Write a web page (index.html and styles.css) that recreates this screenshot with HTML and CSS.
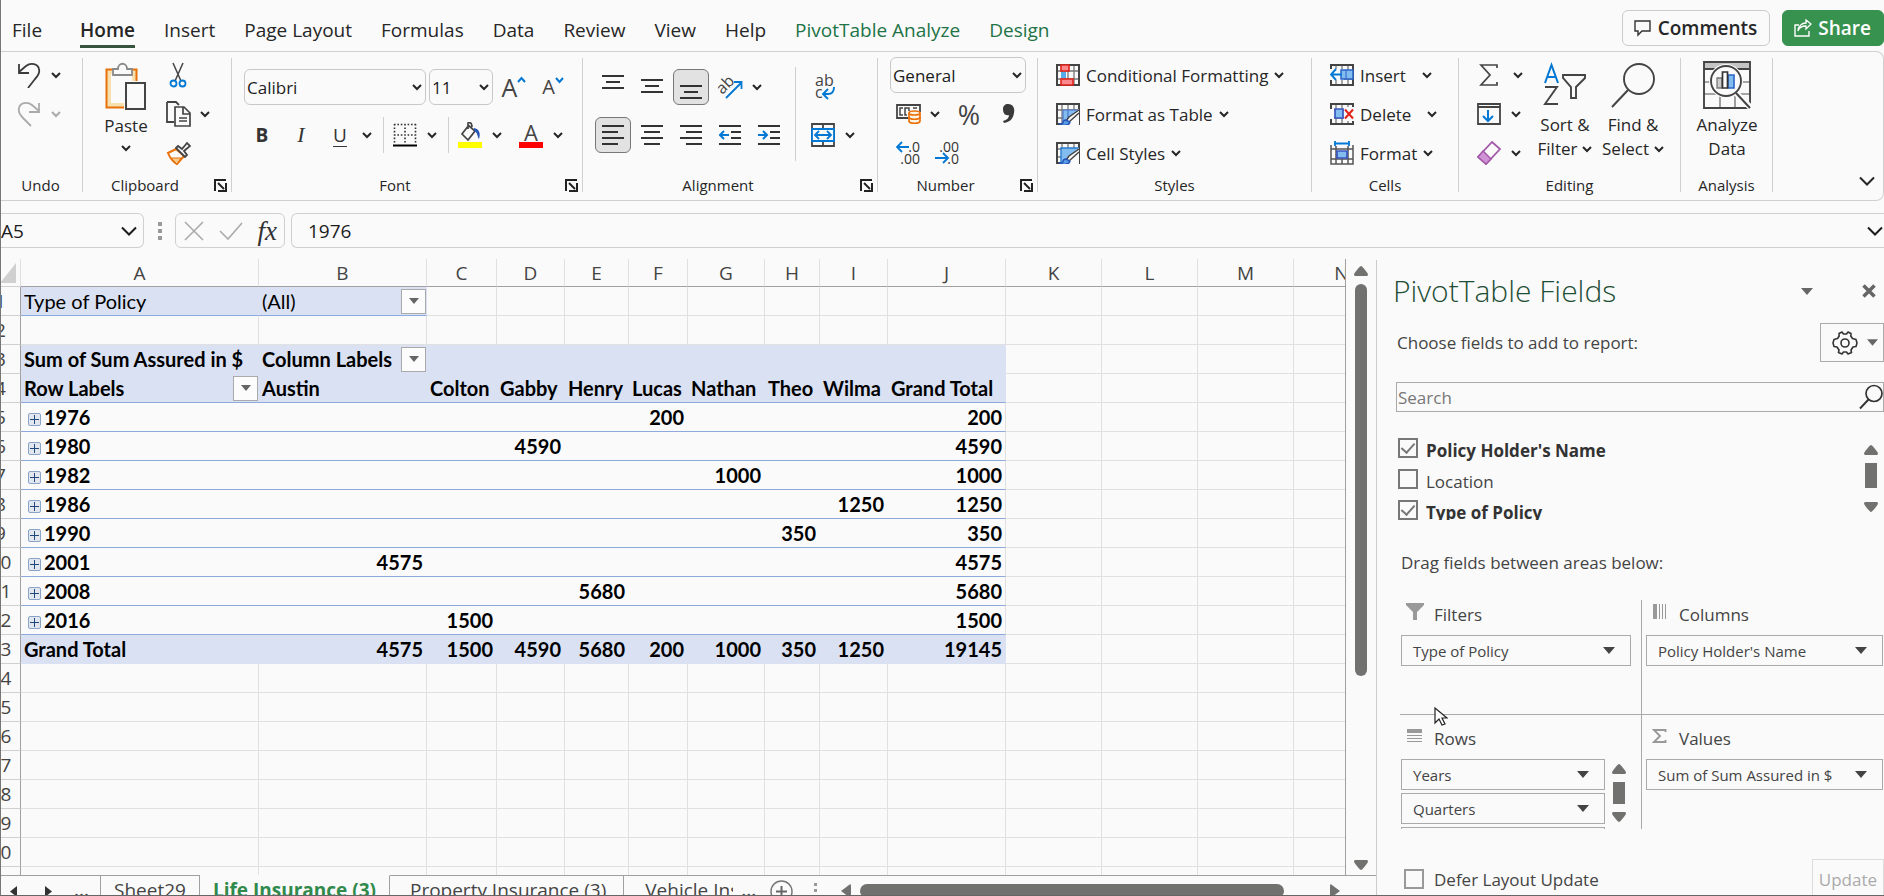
FILE: index.html
```html
<!DOCTYPE html>
<html lang="en">
<head>
<meta charset="utf-8">
<title>Life Insurance - Spreadsheet</title>
<link rel="stylesheet" href="styles.css">
</head>
<body>
<svg class="defs" aria-hidden="true">
  <symbol id="chev" viewBox="0 0 10 8"><path d="M1 2l4 4 4-4" fill="none" stroke="currentColor" stroke-width="2"/></symbol>
  <symbol id="chev-lg" viewBox="0 0 16 10"><path d="M1 1.500l7 7 7-7" fill="none" stroke="currentColor" stroke-width="2"/></symbol>
  <symbol id="tri" viewBox="0 0 12 7"><path d="M0 0h12L6 7z" fill="currentColor"/></symbol>
  <symbol id="launch" viewBox="0 0 13 13"><path d="M1 12V1h11" fill="none" stroke="#222" stroke-width="2"/><path d="M4 4l6 6" stroke="#222" stroke-width="2"/><path d="M12 4v8H4" fill="none" stroke="#222" stroke-width="2"/></symbol>
  <symbol id="sb-up" viewBox="0 0 14 10"><path d="M7 0c1 0 7 7 7 8.500S13 10 12 10H2C1 10 0 10 0 8.500S6 0 7 0z" fill="#71716f"/></symbol>
  <symbol id="sb-down" viewBox="0 0 14 10"><path d="M7 10c1 0 7-7 7-8.500S13 0 12 0H2C1 0 0 0 0 1.500S6 10 7 10z" fill="#71716f"/></symbol>
  <symbol id="grid" viewBox="0 0 24 22"><path d="M1 1h22v20H1zM1 7h22M1 15h22M6 1v20M12 1v20M18 1v20" fill="none" stroke="#777" stroke-width="1.300"/><path d="M1 1h22v20H1z" fill="none" stroke="#444" stroke-width="2"/></symbol>
  <symbol id="brush" viewBox="0 0 24 22"><path d="M23 6L12 17l-8 5h19z" fill="#fafafa"/><path d="M23 7L13 14l-3 4 3 1 10-9" fill="#fafafa" stroke="#444" stroke-width="1.500"/><path d="M10 17c-2 0-3 1-3 3-1 1-2 1-3 1 3 2 9 2 10-2z" fill="#5a9be6" stroke="#2456b8" stroke-width="1.400"/></symbol>
</svg>
<div class="window">
  <header class="tabs">
    <nav class="tab-list" aria-label="Ribbon tabs">
      <button class="tab tab-file">File</button>
      <button class="tab tab-active">Home</button>
      <button class="tab">Insert</button>
      <button class="tab">Page Layout</button>
      <button class="tab">Formulas</button>
      <button class="tab">Data</button>
      <button class="tab">Review</button>
      <button class="tab">View</button>
      <button class="tab">Help</button>
      <button class="tab tab-context">PivotTable Analyze</button>
      <button class="tab tab-context">Design</button>
    </nav>
    <div class="actions">
      <button class="action"><svg width="18" height="18" viewBox="0 0 18 18"><path d="M1 2h15v10H8l-4 4v-4H1z" fill="none" stroke="#333" stroke-width="1.400"/></svg>Comments</button>
      <button class="action action-share"><svg width="18" height="18" viewBox="0 0 18 18"><path d="M5 6H1v11h14v-5" fill="none" stroke="#fff" stroke-width="1.400"/><path d="M4 12c1-4 4-5 8-5v3l5-5-5-4v3C8 4 4 7 4 12z" fill="none" stroke="#fff" stroke-width="1.300"/></svg>Share</button>
    </div>
  </header>

  <section class="ribbon" aria-label="Home ribbon">
    <div class="group group-undo">
      <div class="rows3">
        <div class="split"><button class="ico" aria-label="Undo"><svg width="24" height="26" viewBox="0 0 24 26"><path d="M2 2v9h10M2 10l7-6c5-4 12-2 13 3 1 4-1 7-4 10l-7 9" fill="none" stroke="#3b3b3b" stroke-width="1.800"/></svg></button><button class="chev" aria-label="Undo list"><svg><use href="#chev"/></svg></button></div>
        <div class="split disabled"><button class="ico" aria-label="Redo"><svg width="24" height="26" viewBox="0 0 24 26"><path d="M22 2v9H12M22 10l-7-6C10 0 3 2 2 7c-1 4 1 7 4 10l8 8" fill="none" stroke="#aaa" stroke-width="1.800"/></svg></button><button class="chev" aria-label="Redo list"><svg><use href="#chev"/></svg></button></div>
      </div>
      <div class="label"><span>Undo</span></div>
    </div>

    <div class="group group-clip">
      <div class="body">
        <button class="big big-paste"><svg width="42" height="48" viewBox="0 0 42 48"><path d="M1.500 7.500h30v38h-30z" fill="#f7dfae" stroke="#e8710a" stroke-width="2"/><path d="M6 12h21v29H6z" fill="#fafafa"/><path d="M8 13V7h5c0-7 9-7 9 0h5v6z" fill="#fafafa" stroke="#8a8a8a" stroke-width="1.800"/><path d="M19 19h22v29H19z" fill="#fafafa"/><path d="M21 21h19v26H21z" fill="#fafafa" stroke="#444" stroke-width="2"/></svg><span>Paste</span><svg class="cv"><use href="#chev"/></svg></button>
        <div class="rows3">
          <button class="ico" aria-label="Cut"><svg width="18" height="26" viewBox="0 0 18 26"><path d="M4 1l8 18M14 1L6 19" stroke="#444" stroke-width="1.500"/><g fill="none" stroke="#0078d4" stroke-width="1.800"><circle cx="4.500" cy="21.500" r="3"/><circle cx="13.500" cy="21.500" r="3"/></g></svg></button>
          <div class="split"><button class="ico" aria-label="Copy"><svg width="25" height="26" viewBox="0 0 25 26"><path d="M1 1h9l3 3M1 1v20h7" fill="none" stroke="#444" stroke-width="1.800"/><path d="M9 6h9l6 6v13H9zM17 6v7h7M13 17h8M13 20h8" fill="none" stroke="#444" stroke-width="1.700"/></svg></button><button class="chev" aria-label="Copy options"><svg><use href="#chev"/></svg></button></div>
          <button class="ico" aria-label="Format Painter"><svg width="25" height="25" viewBox="0 0 25 25"><path d="M2 12l8-4 8 7-7 8c-4-2-7-6-9-11z" fill="#fafafa" stroke="#e8710a" stroke-width="2"/><path d="M5 17l10 0-4 6z" fill="#f7c887" stroke="#e8710a"/><path d="M10 7l2-2 4 3 5-6 3 3-6 5 3 4-2 2z" fill="#fafafa" stroke="#444" stroke-width="1.800"/></svg></button>
        </div>
      </div>
      <div class="label"><span>Clipboard</span><button class="launch" aria-label="Clipboard settings"><svg><use href="#launch"/></svg></button></div>
    </div>

    <div class="group group-font">
      <div class="rows2">
        <div class="row">
          <div class="combo combo-font"><select aria-label="Font"><option>Calibri</option></select><svg class="cv"><use href="#chev"/></svg></div>
          <div class="combo combo-size"><select aria-label="Font size"><option>11</option></select><svg class="cv"><use href="#chev"/></svg></div>
          <button class="ico glyph" aria-label="Increase font size"><span class="glyph-lg">A</span><svg width="9" height="24" viewBox="0 0 9 24"><path d="M1 7l3.500-4L8 7" fill="none" stroke="#0078d4" stroke-width="2"/></svg></button>
          <button class="ico glyph" aria-label="Decrease font size"><span class="glyph-md">A</span><svg width="9" height="24" viewBox="0 0 9 24"><path d="M1 3l3.500 4L8 3" fill="none" stroke="#0078d4" stroke-width="2"/></svg></button>
        </div>
        <div class="row">
          <button class="ico bold">B</button>
          <button class="ico ital">I</button>
          <div class="split"><button class="ico under">U</button><button class="chev" aria-label="Underline options"><svg><use href="#chev"/></svg></button></div>
          <span class="sep"></span>
          <div class="split"><button class="ico" aria-label="Borders"><svg width="24" height="24" viewBox="0 0 24 24"><path d="M1 1.500h22M1 12h22M1.500 1v20M12 1v20M22.500 1v20" stroke="#333" stroke-width="1.600" stroke-dasharray="1.600 1.800"/><path d="M0 22.500h24" stroke="#000" stroke-width="2"/></svg></button><button class="chev" aria-label="Border options"><svg><use href="#chev"/></svg></button></div>
          <span class="sep"></span>
          <div class="split"><button class="ico" aria-label="Fill Color"><svg width="24" height="26" viewBox="0 0 24 26"><path d="M10 3l7 6-7 9-6-6 7-9M10 7V1c3-1 4 1 4 4" fill="none" stroke="#444" stroke-width="1.700"/><path d="M16 6c5 1 7 5 5 11-2-2-1-7-5-8z" fill="#2456b8"/><path d="M0 20h24v6H0z" fill="#ff0"/></svg></button><button class="chev" aria-label="Fill options"><svg><use href="#chev"/></svg></button></div>
          <div class="split split-color"><button class="ico fontcolor" aria-label="Font Color"><span>A</span></button><button class="chev" aria-label="Font color options"><svg><use href="#chev"/></svg></button></div>
        </div>
      </div>
      <div class="label"><span>Font</span><button class="launch" aria-label="Font settings"><svg><use href="#launch"/></svg></button></div>
    </div>

    <div class="group group-align">
      <div class="body">
        <div class="rows2">
          <div class="row">
            <button class="ico" aria-label="Top Align"><svg width="22" height="28" viewBox="0 0 22 28"><path d="M0 3h22M4 9h14M0 15h22" stroke="#333" stroke-width="1.800"/></svg></button>
            <button class="ico" aria-label="Middle Align"><svg width="22" height="28" viewBox="0 0 22 28"><path d="M0 7h22M4 13h14M0 19h22" stroke="#333" stroke-width="1.800"/></svg></button>
            <button class="ico pressed" aria-label="Bottom Align"><svg width="22" height="28" viewBox="0 0 22 28"><path d="M0 13h22M4 19h14M0 25h22" stroke="#333" stroke-width="1.800"/></svg></button>
            <div class="split"><button class="ico" aria-label="Orientation"><svg width="26" height="26" viewBox="0 0 26 26"><text x="1" y="17" class="svg-ab" transform="rotate(-45 8 14)">ab</text><path d="M9 24L24 9M17 8h7.500v7" fill="none" stroke="#0078d4" stroke-width="1.800"/></svg></button><button class="chev" aria-label="Orientation options"><svg><use href="#chev"/></svg></button></div>
          </div>
          <div class="row">
            <button class="ico pressed" aria-label="Align Left"><svg width="22" height="22" viewBox="0 0 22 22"><path d="M0 2h22M0 8h16M0 14h22M0 20h16" stroke="#333" stroke-width="1.800"/></svg></button>
            <button class="ico" aria-label="Center"><svg width="22" height="22" viewBox="0 0 22 22"><path d="M0 2h22M3 8h16M0 14h22M3 20h16" stroke="#333" stroke-width="1.800"/></svg></button>
            <button class="ico" aria-label="Align Right"><svg width="22" height="22" viewBox="0 0 22 22"><path d="M0 2h22M6 8h16M0 14h22M6 20h16" stroke="#333" stroke-width="1.800"/></svg></button>
            <button class="ico" aria-label="Decrease Indent"><svg width="22" height="22" viewBox="0 0 22 22"><path d="M0 2h22M12 8h10M12 14h10M0 20h22" stroke="#333" stroke-width="1.800"/><path d="M10 11H1M5 7l-4 4 4 4" fill="none" stroke="#0078d4" stroke-width="2"/></svg></button>
            <button class="ico" aria-label="Increase Indent"><svg width="22" height="22" viewBox="0 0 22 22"><path d="M0 2h22M12 8h10M12 14h10M0 20h22" stroke="#333" stroke-width="1.800"/><path d="M0 11h9M5 7l4 4-4 4" fill="none" stroke="#0078d4" stroke-width="2"/></svg></button>
          </div>
        </div>
        <span class="sep sep-tall"></span>
        <div class="rows2">
          <button class="ico" aria-label="Wrap Text"><svg width="24" height="28" viewBox="0 0 24 28"><text x="4" y="13" class="svg-ab">ab</text><text x="4" y="25" class="svg-ab">c</text><path d="M23 14c0 5-2 7-6 7h-4M17 16l-5 5 5 5" fill="none" stroke="#0078d4" stroke-width="1.900"/></svg></button>
          <div class="split"><button class="ico" aria-label="Merge"><svg width="24" height="24" viewBox="0 0 24 24"><path d="M1 1h22v22H1zM12 1v22" fill="none" stroke="#444" stroke-width="1.800"/><path d="M1 6h22v12H1z" fill="#fafafa" stroke="#0078d4" stroke-width="1.800"/><path d="M4 12h16M8 8l-4 4 4 4M16 8l4 4-4 4" fill="none" stroke="#0078d4" stroke-width="1.800"/></svg></button><button class="chev" aria-label="Merge options"><svg><use href="#chev"/></svg></button></div>
        </div>
      </div>
      <div class="label"><span>Alignment</span><button class="launch" aria-label="Alignment settings"><svg><use href="#launch"/></svg></button></div>
    </div>

    <div class="group group-number">
      <div class="rows3">
        <div class="combo combo-number"><select aria-label="Number format"><option>General</option></select><svg class="cv"><use href="#chev"/></svg></div>
        <div class="row">
          <div class="split"><button class="ico" aria-label="Accounting format"><svg width="25" height="20" viewBox="0 0 25 20"><path d="M24 8V1H1v13h11" fill="none" stroke="#444" stroke-width="1.800"/><path d="M7 4H4v7h3M11 11H9V4h4v3M17 4h4" fill="none" stroke="#444" stroke-width="1.500"/><path d="M13 9v8c0 3 11 3 11 0V9" fill="#fff4e4" stroke="#e8710a" stroke-width="1.700"/><ellipse cx="18.500" cy="9" rx="5.500" ry="2" fill="#fff4e4" stroke="#e8710a" stroke-width="1.700"/><path d="M13 13c0 3 11 3 11 0" fill="none" stroke="#e8710a" stroke-width="1.700"/></svg></button><button class="chev" aria-label="Accounting options"><svg><use href="#chev"/></svg></button></div>
          <button class="ico percent">%</button>
          <button class="ico" aria-label="Comma Style"><svg width="14" height="22" viewBox="0 0 14 22"><path d="M7 1c5 0 7 4 6 9-1 6-4 9-10 10l-1-2c4-1 6-3 6-6C4 13 2 10 2 6c0-3 2-5 5-5z" fill="#3a3a3a"/></svg></button>
        </div>
        <div class="row">
          <button class="ico" aria-label="Increase Decimal"><svg width="24" height="26" viewBox="0 0 24 26"><text x="24" y="12" class="svg-dec">.0</text><text x="24" y="24" class="svg-dec">.00</text><path d="M13 7H1M6 2L1 7l5 5" fill="none" stroke="#0078d4" stroke-width="1.800"/></svg></button>
          <button class="ico" aria-label="Decrease Decimal"><svg width="24" height="26" viewBox="0 0 24 26"><text x="24" y="12" class="svg-dec">.00</text><text x="24" y="24" class="svg-dec">.0</text><path d="M0 18h13M8 13l5 5-5 5" fill="none" stroke="#0078d4" stroke-width="1.800"/></svg></button>
        </div>
      </div>
      <div class="label"><span>Number</span><button class="launch" aria-label="Number settings"><svg><use href="#launch"/></svg></button></div>
    </div>

    <div class="group group-styles">
      <div class="rows3">
        <button class="cmd"><svg width="24" height="22" viewBox="0 0 24 22"><use href="#grid"/><path d="M5 8h5v6H5z" fill="#5aaae8"/><path d="M5 1h8v6H5zM5 15h12v6H5z" fill="#f9898d" stroke="#e2231a" stroke-width="1.600"/></svg><span>Conditional Formatting</span><svg class="cv"><use href="#chev"/></svg></button>
        <button class="cmd"><svg width="24" height="22" viewBox="0 0 24 22"><use href="#grid"/><path d="M7 7h16v14H7z" fill="#83bdf0"/><path d="M7 7h16M7 7v14M12 7v14" fill="none" stroke="#4a73cc" stroke-width="1.200"/><use href="#brush"/></svg><span>Format as Table</span><svg class="cv"><use href="#chev"/></svg></button>
        <button class="cmd"><svg width="24" height="22" viewBox="0 0 24 22"><use href="#grid"/><path d="M5 6h18v15H5z" fill="#83bdf0"/><path d="M5 21V6h18" fill="none" stroke="#2a7bd0" stroke-width="1.400"/><use href="#brush"/></svg><span>Cell Styles</span><svg class="cv"><use href="#chev"/></svg></button>
      </div>
      <div class="label"><span>Styles</span></div>
    </div>

    <div class="group group-cells">
      <div class="rows3">
        <div class="row row-cmd"><button class="cmd"><svg width="24" height="22" viewBox="0 0 24 22"><use href="#grid"/><path d="M0 5h14v11H0z" fill="#fafafa"/><path d="M11 6h12v9H11z" fill="#83bdf0" stroke="#2a64c8" stroke-width="1.500"/><path d="M16 6v9" stroke="#2a64c8"/><path d="M12 10.500H1M6 5l-5 5.500L6 16" fill="none" stroke="#0078d4" stroke-width="1.900"/></svg><span>Insert</span></button><button class="chev" aria-label="Insert options"><svg><use href="#chev"/></svg></button></div>
        <div class="row row-cmd"><button class="cmd"><svg width="24" height="22" viewBox="0 0 24 22"><use href="#grid"/><path d="M0 6h4v10H0zM14 4h10v14H14z" fill="#fafafa"/><path d="M5 6h8v9H5z" fill="#83bdf0" stroke="#3a55c0" stroke-width="1.700"/><path d="M15 6.500l8 9M23 6.500l-8 9" stroke="#e2231a" stroke-width="2"/></svg><span>Delete</span></button><button class="chev" aria-label="Delete options"><svg><use href="#chev"/></svg></button></div>
        <button class="cmd"><svg width="24" height="24" viewBox="0 0 24 24"><path d="M1 4v19h22V4M1 8h22M1 18h22M6 5v18M18 5v18M12 18v5" fill="none" stroke="#555" stroke-width="1.500"/><path d="M7 10h10v7H7z" fill="#83bdf0" stroke="#3a55c0" stroke-width="1.700"/><path d="M5 2.500h14M5 0v5M19 0v5" stroke="#0078d4" stroke-width="1.800"/></svg><span>Format</span><svg class="cv"><use href="#chev"/></svg></button>
      </div>
      <div class="label"><span>Cells</span></div>
    </div>

    <div class="group group-edit">
      <div class="body">
        <div class="rows3">
          <div class="split split-wide"><button class="ico" aria-label="AutoSum"><svg width="20" height="24" viewBox="0 0 20 24"><path d="M18 5V2H2l9 10-9 10h16v-3" fill="none" stroke="#444" stroke-width="1.700"/></svg></button><button class="chev" aria-label="AutoSum options"><svg><use href="#chev"/></svg></button></div>
          <div class="split"><button class="ico" aria-label="Fill"><svg width="24" height="22" viewBox="0 0 24 22"><path d="M1 1h22v20H1zM1 4h22" fill="none" stroke="#444" stroke-width="1.800"/><path d="M11 7v11M6 13l5 5 5-5" fill="none" stroke="#0078d4" stroke-width="2"/></svg></button><button class="chev" aria-label="Fill options"><svg><use href="#chev"/></svg></button></div>
          <div class="split"><button class="ico" aria-label="Clear"><svg width="24" height="24" viewBox="0 0 24 24"><path d="M15 1l8 7L9 23l-8-7z" fill="#fafafa" stroke="#a259a8" stroke-width="1.800"/><path d="M6 10l8 8-5 5-8-7z" fill="#cf92d4" stroke="#a259a8" stroke-width="1.500"/></svg></button><button class="chev" aria-label="Clear options"><svg><use href="#chev"/></svg></button></div>
        </div>
        <button class="big big-sort"><svg width="44" height="48" viewBox="0 0 44 48"><path d="M2 22L8.500 4 15 22M4 16h9" fill="none" stroke="#0078d4" stroke-width="2"/><path d="M2 26h12L2 43h13" fill="none" stroke="#444" stroke-width="1.900"/><path d="M20 14h22v3l-9 9v11h-5V26l-8-9z" fill="none" stroke="#444" stroke-width="1.900"/></svg><span>Sort &amp;</span><span>Filter <svg class="cv"><use href="#chev"/></svg></span></button>
        <button class="big big-find"><svg width="46" height="48" viewBox="0 0 46 48"><circle cx="29" cy="18" r="15" fill="none" stroke="#444" stroke-width="1.900"/><path d="M18 29L2 46" stroke="#444" stroke-width="2"/></svg><span>Find &amp;</span><span>Select <svg class="cv"><use href="#chev"/></svg></span></button>
      </div>
      <div class="label"><span>Editing</span></div>
    </div>

    <div class="group group-analysis">
      <button class="big"><svg width="48" height="48" viewBox="0 0 48 48"><path d="M1 1h46v7H1z" fill="#c4c4c4"/><path d="M1 21h46M1 33h46M17 33v14M32 33v14" stroke="#888" stroke-width="1.600"/><path d="M1 1h46v46H1zM1 8h46" fill="none" stroke="#444" stroke-width="1.900"/><circle cx="23" cy="20" r="17" fill="#fafafa"/><path d="M31 30l18 18" stroke="#fafafa" stroke-width="6"/><circle cx="23" cy="20" r="15" fill="#fafafa" stroke="#444" stroke-width="1.900"/><path d="M33 32l14 15" stroke="#444" stroke-width="2"/><path d="M14 17h5v10h-5z" fill="#ccc" stroke="#777" stroke-width="1.300"/><path d="M25 14h6v13h-6z" fill="#83bdf0" stroke="#2a64c8" stroke-width="1.600"/><path d="M19.500 11h5v16h-5z" fill="#fff" stroke="#333" stroke-width="1.700"/></svg><span>Analyze</span><span>Data</span></button>
      <div class="label"><span>Analysis</span></div>
    </div>
    <button class="collapse" aria-label="Collapse ribbon"><svg width="16" height="10"><use href="#chev-lg"/></svg></button>
  </section>

  <section class="formula" aria-label="Formula bar">
    <div class="namebox"><input aria-label="Name box" value="A5"><svg width="16" height="10"><use href="#chev-lg"/></svg></div>
    <svg class="dots" width="4" height="18" viewBox="0 0 4 18"><path d="M0 0h4v4H0zM0 7h4v4H0zM0 14h4v4H0z" fill="#999"/></svg>
    <div class="fxbox">
      <button aria-label="Cancel"><svg width="20" height="20" viewBox="0 0 20 20"><path d="M1 1l18 18M19 1L1 19" stroke="#aaa" stroke-width="1.600"/></svg></button>
      <button aria-label="Enter"><svg width="24" height="18" viewBox="0 0 24 18"><path d="M1 9l8 8L23 1" fill="none" stroke="#aaa" stroke-width="1.600"/></svg></button>
      <button class="fx" aria-label="Insert function">fx</button>
    </div>
    <div class="formula-input"><input aria-label="Formula" value="1976"><svg width="16" height="10"><use href="#chev-lg"/></svg></div>
  </section>

  <main class="main">
    <section class="book" aria-label="Workbook">
      <div class="sheet-row">
        <div class="sheet">
          <table class="cells">
            <colgroup><col class="c-head"><col class="c-a"><col class="c-b"><col class="c-c"><col class="c-d"><col class="c-e"><col class="c-f"><col class="c-g"><col class="c-h"><col class="c-i"><col class="c-j"><col class="c-k"><col class="c-k"><col class="c-k"><col class="c-k"></colgroup>
            <thead><tr><th class="corner"><svg width="16" height="20" viewBox="0 0 16 20"><path d="M16 0v20H0z" fill="#d0d0d0"/></svg></th><th>A</th><th>B</th><th>C</th><th>D</th><th>E</th><th>F</th><th>G</th><th>H</th><th>I</th><th>J</th><th>K</th><th>L</th><th>M</th><th>N</th></tr></thead>
            <tbody>
              <tr class="filter"><th>1</th><td>Type of Policy</td><td class="has-drop"><div class="drop-cell">(All)<button class="drop" aria-label="Filter Type of Policy"><svg width="10" height="6"><use href="#tri"/></svg></button></div></td><td></td><td></td><td></td><td></td><td></td><td></td><td></td><td></td><td></td><td></td><td></td><td></td></tr>
              <tr><th>2</th><td></td><td></td><td></td><td></td><td></td><td></td><td></td><td></td><td></td><td></td><td></td><td></td><td></td><td></td></tr>
              <tr class="pv band"><th>3</th><td>Sum of Sum Assured in $</td><td class="has-drop"><div class="drop-cell">Column Labels<button class="drop" aria-label="Filter columns"><svg width="10" height="6"><use href="#tri"/></svg></button></div></td><td></td><td></td><td></td><td></td><td></td><td></td><td></td><td></td><td></td><td></td><td></td><td></td></tr>
              <tr class="pv band ruled names"><th>4</th><td class="has-drop"><div class="drop-cell">Row Labels<button class="drop" aria-label="Filter rows"><svg width="10" height="6"><use href="#tri"/></svg></button></div></td><td>Austin</td><td>Colton</td><td>Gabby</td><td>Henry</td><td>Lucas</td><td>Nathan</td><td>Theo</td><td>Wilma</td><td>Grand Total</td><td></td><td></td><td></td><td></td></tr>
              <tr class="pv ruled"><th>5</th><td><button class="exp" aria-label="Expand"></button>1976</td><td></td><td></td><td></td><td></td><td>200</td><td></td><td></td><td></td><td>200</td><td></td><td></td><td></td><td></td></tr>
              <tr class="pv ruled"><th>6</th><td><button class="exp" aria-label="Expand"></button>1980</td><td></td><td></td><td>4590</td><td></td><td></td><td></td><td></td><td></td><td>4590</td><td></td><td></td><td></td><td></td></tr>
              <tr class="pv ruled"><th>7</th><td><button class="exp" aria-label="Expand"></button>1982</td><td></td><td></td><td></td><td></td><td></td><td>1000</td><td></td><td></td><td>1000</td><td></td><td></td><td></td><td></td></tr>
              <tr class="pv ruled"><th>8</th><td><button class="exp" aria-label="Expand"></button>1986</td><td></td><td></td><td></td><td></td><td></td><td></td><td></td><td>1250</td><td>1250</td><td></td><td></td><td></td><td></td></tr>
              <tr class="pv ruled"><th>9</th><td><button class="exp" aria-label="Expand"></button>1990</td><td></td><td></td><td></td><td></td><td></td><td></td><td>350</td><td></td><td>350</td><td></td><td></td><td></td><td></td></tr>
              <tr class="pv ruled"><th>10</th><td><button class="exp" aria-label="Expand"></button>2001</td><td>4575</td><td></td><td></td><td></td><td></td><td></td><td></td><td></td><td>4575</td><td></td><td></td><td></td><td></td></tr>
              <tr class="pv ruled"><th>11</th><td><button class="exp" aria-label="Expand"></button>2008</td><td></td><td></td><td></td><td>5680</td><td></td><td></td><td></td><td></td><td>5680</td><td></td><td></td><td></td><td></td></tr>
              <tr class="pv ruled"><th>12</th><td><button class="exp" aria-label="Expand"></button>2016</td><td></td><td>1500</td><td></td><td></td><td></td><td></td><td></td><td></td><td>1500</td><td></td><td></td><td></td><td></td></tr>
              <tr class="pv band"><th>13</th><td>Grand Total</td><td>4575</td><td>1500</td><td>4590</td><td>5680</td><td>200</td><td>1000</td><td>350</td><td>1250</td><td>19145</td><td></td><td></td><td></td><td></td></tr>
              <tr><th>14</th><td></td><td></td><td></td><td></td><td></td><td></td><td></td><td></td><td></td><td></td><td></td><td></td><td></td><td></td></tr>
              <tr><th>15</th><td></td><td></td><td></td><td></td><td></td><td></td><td></td><td></td><td></td><td></td><td></td><td></td><td></td><td></td></tr>
              <tr><th>16</th><td></td><td></td><td></td><td></td><td></td><td></td><td></td><td></td><td></td><td></td><td></td><td></td><td></td><td></td></tr>
              <tr><th>17</th><td></td><td></td><td></td><td></td><td></td><td></td><td></td><td></td><td></td><td></td><td></td><td></td><td></td><td></td></tr>
              <tr><th>18</th><td></td><td></td><td></td><td></td><td></td><td></td><td></td><td></td><td></td><td></td><td></td><td></td><td></td><td></td></tr>
              <tr><th>19</th><td></td><td></td><td></td><td></td><td></td><td></td><td></td><td></td><td></td><td></td><td></td><td></td><td></td><td></td></tr>
              <tr><th>20</th><td></td><td></td><td></td><td></td><td></td><td></td><td></td><td></td><td></td><td></td><td></td><td></td><td></td><td></td></tr>
              <tr><th></th><td></td><td></td><td></td><td></td><td></td><td></td><td></td><td></td><td></td><td></td><td></td><td></td><td></td><td></td></tr>
            </tbody>
          </table>
        </div>
        <div class="vscroll"><svg><use href="#sb-up"/></svg><div class="vtrack"><div class="vthumb"></div></div><svg><use href="#sb-down"/></svg></div>
      </div>
      <div class="sheetbar">
        <div class="sheet-nav">
          <button aria-label="Previous sheet"><svg width="7" height="11" viewBox="0 0 7 11"><path d="M7 0v11L0 5.500z" fill="#333"/></svg></button>
          <button aria-label="Next sheet"><svg width="7" height="11" viewBox="0 0 7 11"><path d="M0 0v11l7-5.500z" fill="#333"/></svg></button>
          <button>...</button>
        </div>
        <button class="stab stab-first">Sheet29</button>
        <button class="stab stab-active">Life Insurance (3)</button>
        <button class="stab stab-prop">Property Insurance (3)</button>
        <button class="stab stab-cut"><span>Vehicle Insurance</span></button>
        <button class="more">...</button>
        <button class="add" aria-label="New sheet"><svg width="23" height="23" viewBox="0 0 23 23"><circle cx="11.500" cy="11.500" r="10.500" fill="none" stroke="#777" stroke-width="1.500"/><path d="M11.500 6v11M6 11.500h11" stroke="#666" stroke-width="2"/></svg></button>
        <svg class="bar-dots" width="3" height="18" viewBox="0 0 3 18"><path d="M0 0h3v3H0zM0 6h3v3H0zM0 12h3v3H0z" fill="#999"/></svg>
        <div class="hscroll"><svg width="10" height="14" viewBox="0 0 10 14"><path d="M10 2v10c0 2-1 2-2 1L0 7l8-6c1-1 2-1 2 1z" fill="#71716f"/></svg><div class="htrack"><div class="hthumb"></div></div><svg width="10" height="14" viewBox="0 0 10 14"><path d="M0 2v10c0 2 1 2 2 1l8-6-8-6C1 0 0 0 0 2z" fill="#71716f"/></svg></div>
      </div>
    </section>

    <aside class="pane" aria-label="PivotTable Fields">
      <div class="pane-head">
        <h1>PivotTable Fields</h1>
        <button class="pane-menu" aria-label="Pane options"><svg width="14" height="7"><use href="#tri"/></svg></button>
        <button aria-label="Close"><svg width="14" height="14" viewBox="0 0 14 14"><path d="M1.500 1.500l11 11M12.500 1.500l-11 11" stroke="#666" stroke-width="3.500"/></svg></button>
      </div>
      <div class="choose">
        <label for="search">Choose fields to add to report:</label>
        <button class="gear" aria-label="Tools"><svg width="26" height="24" viewBox="-13 -12 26 24"><path d="M-6 -9.500L-3 -11 -1.500 -9H1.500L3 -11 6 -9.500 5.800 -7 7.500 -4.500 11 -3.500 12 0 11 3.500 8 4 6 7 6.500 9.500 3 11 1.500 9H-1.500L-3 11 -6.500 9.500 -6 7 -8 4 -11 3.500 -12 0 -11 -3.500 -7.500 -4.500 -5.800 -7z" fill="none" stroke="#333" stroke-width="1.600" stroke-linejoin="round"/><circle r="4" fill="none" stroke="#333" stroke-width="1.600"/></svg><svg width="11" height="7"><use href="#tri"/></svg></button>
      </div>
      <div class="search"><input id="search" type="text" placeholder="Search"><svg width="24" height="26" viewBox="0 0 24 26"><circle cx="15" cy="9.500" r="8" fill="none" stroke="#333" stroke-width="1.700"/><path d="M9.500 15.500L1 24.500" stroke="#333" stroke-width="1.900"/></svg></div>
      <div class="fields">
        <div class="field-list">
          <label class="strong"><input type="checkbox" checked>Policy Holder's Name</label>
          <label><input type="checkbox">Location</label>
          <label class="strong"><input type="checkbox" checked>Type of Policy</label>
        </div>
        <div class="mini mini-fields"><svg><use href="#sb-up"/></svg><div class="mini-thumb"></div><svg><use href="#sb-down"/></svg></div>
      </div>
      <p class="drag">Drag fields between areas below:</p>
      <div class="areas">
        <section class="area">
          <h2><svg width="18" height="18" viewBox="0 0 18 18"><path d="M0 0h18v2l-7 7v8H7V9L0 2z" fill="#999"/></svg>Filters</h2>
          <button class="pill">Type of Policy<svg width="12" height="7"><use href="#tri"/></svg></button>
        </section>
        <section class="area">
          <h2><svg width="18" height="18" viewBox="0 0 18 18"><path d="M2 1h4v15H2z" fill="#999"/><path d="M8.500 1v15M11.500 1v15M14.500 1v15" stroke="#999"/></svg>Columns</h2>
          <button class="pill">Policy Holder's Name<svg width="12" height="7"><use href="#tri"/></svg></button>
        </section>
        <section class="area">
          <h2><svg width="18" height="18" viewBox="0 0 18 18"><path d="M1 2h15v4H1z" fill="#999"/><path d="M1 8.500h15M1 11.500h15M1 14.500h15" stroke="#999"/></svg>Rows</h2>
          <div class="stack">
            <div class="pills">
              <button class="pill">Years<svg width="12" height="7"><use href="#tri"/></svg></button>
              <button class="pill">Quarters<svg width="12" height="7"><use href="#tri"/></svg></button>
              <button class="pill" aria-label="Date"></button>
            </div>
            <div class="mini"><svg><use href="#sb-up"/></svg><div class="mini-thumb"></div><svg><use href="#sb-down"/></svg></div>
          </div>
        </section>
        <section class="area">
          <h2><svg width="18" height="18" viewBox="0 0 18 18"><path d="M14.500 5V3H3l6 6-6 6h11.500v-2" fill="none" stroke="#999" stroke-width="1.900"/></svg>Values</h2>
          <button class="pill">Sum of Sum Assured in $<svg width="12" height="7"><use href="#tri"/></svg></button>
        </section>
        <svg class="cursor" width="14" height="20" viewBox="0 0 14 20"><path d="M1 1v15l4-4 3 6 3-1-3-6h5z" fill="#fff" stroke="#222" stroke-width="1.200"/></svg>
      </div>
      <div class="defer">
        <label><input type="checkbox">Defer Layout Update</label>
        <button class="update" disabled>Update</button>
      </div>
    </aside>
  </main>
</div>
</body>
</html>
```
FILE: styles.css
```css
* { box-sizing: border-box; }

body {
  margin: 0;
  background: #fafafa;
  color: #262626;
  font: 17px "Open Sans", "Noto Sans", sans-serif;
}

button, input, select {
  margin: 0;
  padding: 0;
  border: 0;
  background: none;
  color: inherit;
  font: inherit;
}

svg { display: block; flex: none; }
.defs { position: absolute; width: 0; height: 0; }

.window {
  display: flex;
  flex-direction: column;
  height: 100vh;
  border-left: 1px solid #777;
  border-bottom: 1px solid #666;
  overflow: hidden;
}

/* Tab strip */
.tabs {
  display: flex;
  justify-content: space-between;
  align-items: center;
  height: 51px;
  flex: none;
  padding: 10px 0 0 11px;
}
.tab-list { display: flex; gap: 29px; margin-top: 2px; }
.tab { font-size: 19px; line-height: 30px; white-space: nowrap; border-bottom: 3px solid transparent; }
.tab-file { margin-right: 9px; }
.tab-active { font-weight: 600; border-color: #35533d; }
.tab-context { color: #217346; }
.actions { display: flex; gap: 12px; align-self: flex-start; }
.action {
  display: flex;
  align-items: center;
  gap: 6px;
  height: 36px;
  padding: 0 12px 0 11px;
  border: 1px solid #ccc;
  border-radius: 6px;
  font-size: 19px;
  font-weight: 600;
}
.action-share { background: #38924f; border-color: #38924f; color: #fff; }

/* Ribbon */
.ribbon {
  display: flex;
  flex: none;
  height: 150px;
  border: 1px solid #d0d0d0;
  border-left: 0;
  border-radius: 0 8px 8px 0;
}
.group {
  position: relative;
  display: flex;
  flex-direction: column;
  flex: none;
}
.group::after {
  content: "";
  position: absolute;
  right: 0;
  top: 6px;
  bottom: 8px;
  width: 1px;
  background: #d0d0d0;
}
.group-undo { width: 82px; padding-left: 10px; }
.group-undo .label { margin-left: -12px; }
.group-clip { width: 149px; }
.group-font { width: 351px; }
.group-align { width: 295px; }
.group-number { width: 160px; }
.group-styles { width: 274px; }
.group-cells { width: 147px; }
.group-edit { width: 222px; }
.group-analysis { width: 92px; }
.body { display: flex; }
.group-clip .body { padding-left: 21px; gap: 12px; }
.group-edit .body { padding-left: 12px; }
.label {
  display: flex;
  align-items: center;
  margin-top: auto;
  padding: 0 1px 5px 0;
  font-size: 15px;
  line-height: 20px;
}
.label span { flex: 1; text-align: center; }
.launch { width: 24px; display: grid; place-items: center end; padding-right: 4px; }
.launch svg { width: 13px; height: 13px; }

.rows3 { display: grid; grid-template-rows: repeat(3, 36px); gap: 3px; padding-top: 5px; justify-items: start; }
.rows2 { display: grid; grid-template-rows: repeat(2, 36px); gap: 12px; padding-top: 17px; justify-items: start; }
.group-font .rows2, .group-number .rows3, .group-align .body { padding-left: 12px; }
.group-styles .rows3, .group-cells .rows3 { padding-left: 18px; }
.row { display: flex; gap: 3px; align-items: center; }
.split { display: flex; }
.split-color { margin-left: 4px; }
.ico { width: 36px; height: 36px; display: flex; align-items: center; justify-content: center; }
.pressed { background: #e2e2e2; border: 1px solid #777; border-radius: 6px; }
.chev { width: 18px; height: 36px; display: grid; place-items: center; }
.chev svg, .cv { width: 10px; height: 8px; }
.disabled { color: #aaa; }
.sep { width: 1px; height: 36px; margin-left: 4px; background: #d0d0d0; }
.sep-tall { height: 94px; margin: 15px 9px 0 8px; }

.combo { display: grid; align-items: center; height: 36px; border: 1px solid #c8c8c8; border-radius: 6px; }
.combo > * { grid-area: 1 / 1; }
.combo select { appearance: none; width: 100%; height: 34px; padding-left: 2px; color: #1c1c1c; }
.combo .cv { justify-self: end; margin-right: 3px; pointer-events: none; }
.combo-font { width: 182px; }
.combo-size { width: 64px; }
.combo-number { width: 136px; }

.glyph { color: #444; }
.glyph-lg { font-size: 25px; line-height: 30px; }
.glyph-md { font-size: 20px; line-height: 30px; }
.bold { font-weight: 700; font-size: 19px; color: #333; }
.ital { font: italic 22px "Liberation Serif", serif; color: #333; }
.under { font-size: 19px; color: #333; text-decoration: underline; text-underline-offset: 4px; }
.fontcolor span { width: 24px; height: 25px; border-bottom: 6px solid red; font-size: 22px; line-height: 18px; color: #444; }
.percent { font-size: 27px; color: #444; }
.svg-ab { font: 16px "Open Sans", sans-serif; fill: #444; }
.svg-dec { font: 14px "Open Sans", sans-serif; fill: #333; text-anchor: end; }

.group-number .row .split { margin-right: 4px; }
.cmd { display: flex; align-items: center; gap: 6px; white-space: nowrap; }
.row-cmd { gap: 12px; }
.split-wide { gap: 2px; }

.big { display: flex; flex-direction: column; align-items: center; padding-top: 9px; line-height: 24px; white-space: nowrap; }
.big span { display: flex; align-items: center; gap: 5px; }
.big > svg:first-child { margin-bottom: 4px; }
.big-paste { width: 44px; padding-top: 10px; }
.big-paste .cv { margin-top: 6px; }
.big-sort { width: 64px; margin-left: 6px; }
.big-find { width: 72px; }
.group-analysis .big { align-self: center; }
.collapse { margin: auto 8px 14px auto; }

/* Formula bar */
.formula { display: flex; align-items: center; flex: none; height: 35px; margin-top: 12px; font-size: 19px; color: #1c1c1c; }
.namebox, .fxbox, .formula-input { display: flex; align-items: center; height: 35px; border: 1px solid #d0d0d0; border-radius: 6px; }
.namebox { width: 143px; border-left: 0; border-radius: 0 6px 6px 0; padding-right: 6px; }
.namebox input { flex: 1; min-width: 0; }
.dots { margin: 0 13px 0 14px; }
.fxbox { width: 110px; justify-content: space-between; padding: 0 7px 0 8px; }
.fx { font: italic 27px/28px "Liberation Serif", serif; color: #333; }
.formula-input { flex: 1; margin-left: 6px; padding: 0 1px 0 16px; border-right: 0; border-radius: 6px 0 0 6px; }
.formula-input input { flex: 1; }

/* Worksheet */
.main { display: flex; flex: 1; min-height: 0; }
.book { display: flex; flex-direction: column; flex: 1; min-width: 0; padding-top: 11px; }
.sheet-row { display: flex; flex: 1; min-height: 0; }
.sheet { flex: 1; min-width: 0; overflow: hidden; border-right: 1px solid #a0a0a0; }
.cells { table-layout: fixed; width: 1409px; margin-left: -20px; border-collapse: separate; border-spacing: 0; }
.c-head { width: 40px; }
.c-a { width: 238px; }
.c-b { width: 168px; }
.c-c { width: 70px; }
.c-d { width: 68px; }
.c-e { width: 64px; }
.c-f { width: 59px; }
.c-g { width: 77px; }
.c-h { width: 55px; }
.c-i { width: 68px; }
.c-j { width: 118px; }
.c-k { width: 96px; }
.cells th, .cells td { height: 29px; padding: 0 3px; border-right: 1px solid #e0e0e0; border-bottom: 1px solid #e0e0e0; line-height: 26px; white-space: nowrap; }
.cells th { font-size: 19px; font-weight: 400; color: #444; }
.cells tbody th { padding: 0; border-right-color: #a0a0a0; border-bottom-color: #d0d0d0; }
.cells thead th { height: 28px; border-bottom-color: #a0a0a0; }
.cells thead .corner { padding: 0 4px 0 0; border-bottom-color: #d0d0d0; }
.corner svg { margin-left: auto; }
.cells td { font: 20px/26px Lato, sans-serif; color: #000; text-align: right; }
.cells td:nth-child(2), .names td, .cells .has-drop { text-align: left; }
.cells .names td { text-align: left; }
.filter td:nth-child(-n+3) { background: #dae1f2; border-bottom-color: #8ea9db; border-right-color: #dae1f2; }
.pv td { font-weight: 700; }
.cells .pv td:nth-child(-n+10) { border-right: 0; padding-right: 4px; }
.band td:nth-child(-n+11) { background: #dae1f2; border-color: #dae1f2; }
.ruled td:nth-child(-n+11) { border-bottom-color: #8ea9db; }
.cells .has-drop { padding-right: 0; }
.cells .pv td.has-drop:nth-child(-n+10) { padding-right: 1px; }
.drop-cell { display: flex; align-items: center; justify-content: space-between; height: 26px; }
.drop { width: 25px; height: 25px; display: grid; place-items: center; border: 1px solid #aaa; background: #fcfcfc; color: #666; }
.exp { width: 13px; height: 13px; margin: 0 3px 0 4px; border: 1px solid #8aa4c8; border-radius: 2px; vertical-align: 0; background: linear-gradient(#1f497d, #1f497d) center / 9px 1px no-repeat, linear-gradient(#1f497d, #1f497d) center / 1px 9px no-repeat, #e2e6ee; }

.vscroll { width: 30px; flex: none; display: flex; flex-direction: column; align-items: center; padding: 7px 0 5px; }
.vscroll svg { width: 14px; height: 10px; }
.vtrack { flex: 1; width: 12px; margin: 8px 0; }
.vthumb { height: 69%; border-radius: 6px; background: #71716f; }

.sheetbar { display: flex; flex: none; height: 20px; overflow: hidden; font-size: 19px; line-height: 27px; color: #444; }
.sheetbar button { flex: none; display: flex; white-space: nowrap; }
.sheet-nav { display: flex; gap: 28px; width: 99px; padding-left: 9px; border-top: 1px solid #a0a0a0; }
.sheet-nav svg { margin-top: 10px; }
.sheet-nav button:last-child { margin-left: -6px; }
.sheetbar .stab { height: 30px; padding: 1px 13px 0; border-top: 1px solid #a0a0a0; border-right: 1px solid #a0a0a0; }
.sheetbar .stab-first { border-left: 1px solid #a0a0a0; }
.sheetbar .stab-active { border-top-color: transparent; color: #2f8a4c; font-weight: 700; }
.sheetbar .stab-prop { padding: 1px 17px 0 20px; }
.sheetbar .stab-cut { width: 109px; border-right: 0; padding: 1px 0 0 21px; }
.stab-cut span { overflow: hidden; }
.more, .add, .bar-dots, .hscroll { border-top: 1px solid #a0a0a0; }
.sheetbar .more { width: 37px; padding-left: 8px; border-top: 1px solid #a0a0a0; }
.sheetbar .add { width: 44px; padding-top: 4px; border-top: 1px solid #a0a0a0; }
.bar-dots { padding-top: 7px; height: 26px; width: 3px; }
.hscroll { flex: 1; display: flex; gap: 9px; padding: 8px 36px 0 24px; height: 26px; }
.htrack { flex: 1; }
.hthumb { width: 92%; height: 14px; border-radius: 7px; background: #71716f; }

/* Field pane */
.pane { width: 508px; flex: none; margin-top: 12px; padding: 8px 0 0 19px; border-left: 1px solid #ccc; color: #444; overflow: hidden; }
.pane-head { display: flex; align-items: center; height: 46px; padding-right: 8px; color: #666; }
.pane h1 { flex: 1; margin: 0 0 0 -3px; font-size: 30px; font-weight: 300; line-height: 46px; color: #1f4e36; }
.pane-menu { margin-right: 48px; }
.choose { display: flex; align-items: center; justify-content: space-between; margin-top: 9px; padding-left: 1px; }
.gear { display: flex; align-items: center; gap: 9px; height: 39px; padding: 0 5px 0 11px; border: 1px solid #aaa; color: #666; }
.search { display: flex; align-items: center; height: 30px; margin-top: 20px; border: 1px solid #aaa; }
.search input { flex: 1; height: 26px; padding-left: 1px; outline: 0; }
.search input::placeholder { color: #777; opacity: 1; }
.fields { display: flex; justify-content: space-between; height: 85px; margin-top: 23px; padding: 0 6px 0 2px; overflow: hidden; }
.field-list label { display: flex; align-items: center; gap: 8px; height: 31px; }
.strong { font-weight: 700; color: #333; }
.pane input[type="checkbox"] { appearance: none; display: grid; place-items: center; flex: none; width: 20px; height: 20px; border: 2px solid #777; }
.pane input[type="checkbox"]:checked::before { content: ""; width: 6px; height: 11px; margin-bottom: 3px; border: solid #777; border-width: 0 2px 2px 0; transform: rotate(42deg); }
.field-list input { margin-bottom: 5px; }
.mini { display: flex; flex-direction: column; align-items: center; gap: 8px; padding-top: 13px; }
.mini svg { width: 14px; height: 10px; }
.mini-thumb { width: 12px; height: 25px; background: #71716f; }
.mini-fields { padding-top: 10px; }
.mini-fields .mini-thumb { margin-bottom: 6px; }
.drag { margin: 30px 0 0 5px; line-height: 26px; }
.areas { position: relative; display: grid; grid-template: 115px 114px / 1fr 1fr; margin: 24px 0 0 4px; }
.area { min-width: 0; overflow: hidden; padding: 1px 1px 0 4px; }
.area:nth-child(odd) { padding: 1px 10px 0 1px; border-right: 1px solid #aaa; }
.area:nth-child(-n+2) { border-bottom: 1px solid #aaa; }
.area:nth-child(n+3) { padding-top: 10px; }
.area h2 { display: flex; gap: 10px; margin: 0 0 6px 5px; font-size: 17px; font-weight: 400; line-height: 28px; }
.area h2 svg { margin-top: 2px; }
.pill { display: flex; align-items: center; justify-content: space-between; width: 100%; height: 31px; padding: 0 15px 0 11px; border: 1px solid #aaa; font-size: 15px; }
.stack { display: flex; gap: 7px; }
.pills { display: grid; gap: 3px; flex: 1; }
.stack .mini { padding: 5px 5px 0 0; }
.stack .mini-thumb { height: 22px; }
.cursor { position: absolute; left: 34px; top: 107px; }
.defer { display: flex; justify-content: space-between; align-items: flex-start; margin: 30px 0 0 8px; }
.defer label { display: flex; align-items: center; gap: 10px; height: 40px; }
.pane .defer input { border-color: #999; }
.update { height: 40px; padding: 0 6px; border: 1px solid #ddd; color: #aaa; }
```
